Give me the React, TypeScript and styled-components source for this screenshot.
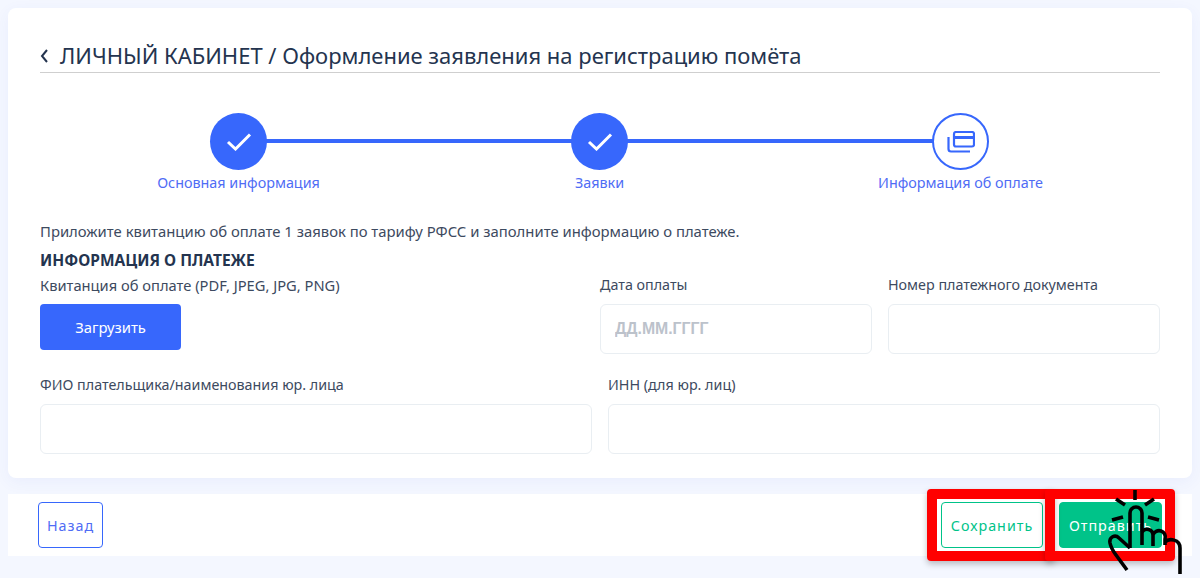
import React from 'react';
import styled, { createGlobalStyle } from 'styled-components';

const GlobalStyle = createGlobalStyle`
  html, body {
    margin: 0;
    padding: 0;
    background: #f4f7ff;
    font-family: "Noto Sans", "Open Sans", sans-serif;
    color: #2b3a55;
  }
  * { box-sizing: border-box; }
`;

const Page = styled.div`
  position: relative;
  width: 1200px;
  height: 578px;
  padding: 8px;
  overflow: hidden;
`;

const Card = styled.section`
  height: 470px;
  padding: 32px 32px 0;
  background: #fff;
  border-radius: 8px;
  box-shadow: 0 4px 16px rgba(60, 90, 220, 0.06);
`;

const Title = styled.h1`
  display: flex;
  align-items: center;
  gap: 12px;
  height: 33px;
  margin: 0;
  border-bottom: 1px solid #cfcfcf;
  font-size: 21.97px;
  line-height: 32px;
  font-weight: 400;
  color: #24344f;
`;

const Stepper = styled.div`
  display: grid;
  grid-template-columns: repeat(3, 361px);
  margin: 40px 0 0 18px;
`;

const Step = styled.div<{ $last?: boolean }>`
  position: relative;
  display: flex;
  flex-direction: column;
  align-items: center;

  &::after {
    content: '';
    display: ${p => (p.$last ? 'none' : 'block')};
    position: absolute;
    top: 26px;
    left: 50%;
    width: 100%;
    height: 4px;
    background: #3767fc;
  }
`;

const Circle = styled.div<{ $done?: boolean }>`
  position: relative;
  z-index: 1;
  width: 57px;
  height: 57px;
  display: flex;
  align-items: center;
  justify-content: center;
  border-radius: 50%;
  background: ${p => (p.$done ? '#3767fc' : '#fff')};
  border: ${p => (p.$done ? '0' : '2px solid #3767fc')};
`;

const StepLabel = styled.div`
  margin-top: 3px;
  font-size: 14.35px;
  line-height: 20px;
  color: #4f6cf5;
`;

const Note = styled.p`
  margin: 28px 0 0;
  font-size: 14.85px;
  line-height: 20px;
  color: #3d4a60;
`;

const Heading = styled.h2`
  margin: 9px 0 0;
  font-size: 15.5px;
  line-height: 20px;
  font-weight: 700;
  color: #24344f;
`;

const TopRow = styled.div`
  display: grid;
  grid-template-columns: 2fr 1fr 1fr;
  gap: 16px;
  margin-top: 5px;
`;

const BottomRow = styled.div`
  display: grid;
  grid-template-columns: 1fr 1fr;
  gap: 16px;
  margin-top: 21px;
`;

const Field = styled.div`
  display: flex;
  flex-direction: column;
  align-items: flex-start;
`;

const Label = styled.label<{ $wide?: boolean }>`
  height: 19px;
  margin-bottom: 10px;
  font-size: ${p => (p.$wide ? '14.7px' : '14.3px')};
  line-height: 20px;
  color: #3d4a60;
`;

const Input = styled.input`
  width: 100%;
  height: 50px;
  padding: 0 14px;
  border: 1px solid #e9eef2;
  border-radius: 6px;
  background: #fff;
  font: 700 15.8px "Liberation Sans", sans-serif;
  outline: none;

  &::placeholder {
    color: #bcc2cb;
    opacity: 1;
  }
`;

const UploadButton = styled.button`
  width: 141px;
  height: 46px;
  border: 0;
  border-radius: 4px;
  background: #3767fc;
  color: #fff;
  font: 400 14.8px "Noto Sans", sans-serif;
`;

const Footer = styled.footer`
  display: flex;
  justify-content: space-between;
  align-items: center;
  height: 62px;
  margin-top: 16px;
  padding: 0 30px;
  background: #fff;
`;

const Actions = styled.div`
  display: flex;
  gap: 16px;
`;

const ActionButton = styled.button<{ $kind: 'back' | 'save' | 'send' }>`
  height: 46px;
  padding: 0;
  width: ${p => (p.$kind === 'back' ? '65px' : p.$kind === 'save' ? '102px' : '103px')};
  border-radius: 4px;
  border: 1px solid ${p => (p.$kind === 'back' ? '#3767fc' : '#00c389')};
  background: ${p => (p.$kind === 'send' ? '#00c389' : '#fff')};
  color: ${p => (p.$kind === 'back' ? '#4f6cf5' : p.$kind === 'save' ? '#00c389' : '#fff')};
  font: 400 14.3px "Noto Sans", sans-serif;
  letter-spacing: 1px;
  white-space: nowrap;
  overflow: hidden;
`;

/* red annotation frames and the pointer drawn over the screenshot */
const RedFrame = styled.div<{ $left: number; $width: number }>`
  position: absolute;
  top: 489px;
  left: ${p => p.$left}px;
  width: ${p => p.$width}px;
  height: 72px;
  border: 10px solid #ff0000;
  border-radius: 4px;
  box-shadow: 0 3px 6px rgba(0, 0, 0, 0.25);
  pointer-events: none;
`;

const Pointer = styled.svg`
  position: absolute;
  top: 485px;
  left: 1100px;
  width: 90px;
  height: 93px;
`;

const Check = () => (
  <svg width="26" height="18" viewBox="0 0 26 18" fill="none" stroke="#fff" strokeWidth="3">
    <path d="M2 9l7.5 7L24 1.5" />
  </svg>
);

const CardsIcon = () => (
  <svg width="28" height="22" viewBox="0 0 28 22" fill="none" stroke="#3767fc" strokeWidth="2.2">
    <rect x="7" y="1" width="20" height="14.5" rx="2" />
    <path d="M7 6.5h20" strokeWidth="3" />
    <path d="M1.5 6v12a2.5 2.5 0 0 0 2.5 2.5h19" />
  </svg>
);

const Chevron = () => (
  <svg width="8" height="14" viewBox="0 0 8 14" fill="none" stroke="#24344f" strokeWidth="2">
    <path d="M7 1L2 7l5 6" />
  </svg>
);

export default function App() {
  return (
    <Page>
      <GlobalStyle />
      <Card>
        <Title>
          <Chevron />
          <span>ЛИЧНЫЙ КАБИНЕТ / Оформление заявления на регистрацию помёта</span>
        </Title>
        <Stepper>
          <Step>
            <Circle $done><Check /></Circle>
            <StepLabel>Основная информация</StepLabel>
          </Step>
          <Step>
            <Circle $done><Check /></Circle>
            <StepLabel>Заявки</StepLabel>
          </Step>
          <Step $last>
            <Circle><CardsIcon /></Circle>
            <StepLabel>Информация об оплате</StepLabel>
          </Step>
        </Stepper>
        <Note>Приложите квитанцию об оплате 1 заявок по тарифу РФСС и заполните информацию о платеже.</Note>
        <Heading>ИНФОРМАЦИЯ О ПЛАТЕЖЕ</Heading>
        <TopRow>
          <Field>
            <Label $wide>Квитанция об оплате (PDF, JPEG, JPG, PNG)</Label>
            <UploadButton>Загрузить</UploadButton>
          </Field>
          <Field>
            <Label>Дата оплаты</Label>
            <Input placeholder="ДД.ММ.ГГГГ" />
          </Field>
          <Field>
            <Label>Номер платежного документа</Label>
            <Input />
          </Field>
        </TopRow>
        <BottomRow>
          <Field>
            <Label>ФИО плательщика/наименования юр. лица</Label>
            <Input />
          </Field>
          <Field>
            <Label>ИНН (для юр. лиц)</Label>
            <Input />
          </Field>
        </BottomRow>
      </Card>
      <Footer>
        <ActionButton $kind="back">Назад</ActionButton>
        <Actions>
          <ActionButton $kind="save">Сохранить</ActionButton>
          <ActionButton $kind="send">Отправить</ActionButton>
        </Actions>
      </Footer>
      <RedFrame $left={927} $width={128} />
      <RedFrame $left={1045} $width={130} />
      <Pointer viewBox="0 0 90 93" fill="none" stroke="#000" strokeWidth="3.6" strokeLinecap="butt" strokeLinejoin="round">
        <path d="M35 5v10M16 14l9 6M54 14l-9 6M12 35l11-3M59 35l-11-3" />
        <path d="M30 63V28a6 6 0 0 1 12 0v32" />
        <path d="M42 47a6 6 0 0 1 11 3v11M53 50a6 6 0 0 1 12 4v6M65 57c4-4 15-3 15 6v26" />
        <path d="M30 63L19 53c-4-4-10-1-9 5 1 5 3 8 6 12l11 15" />
      </Pointer>
    </Page>
  );
}
